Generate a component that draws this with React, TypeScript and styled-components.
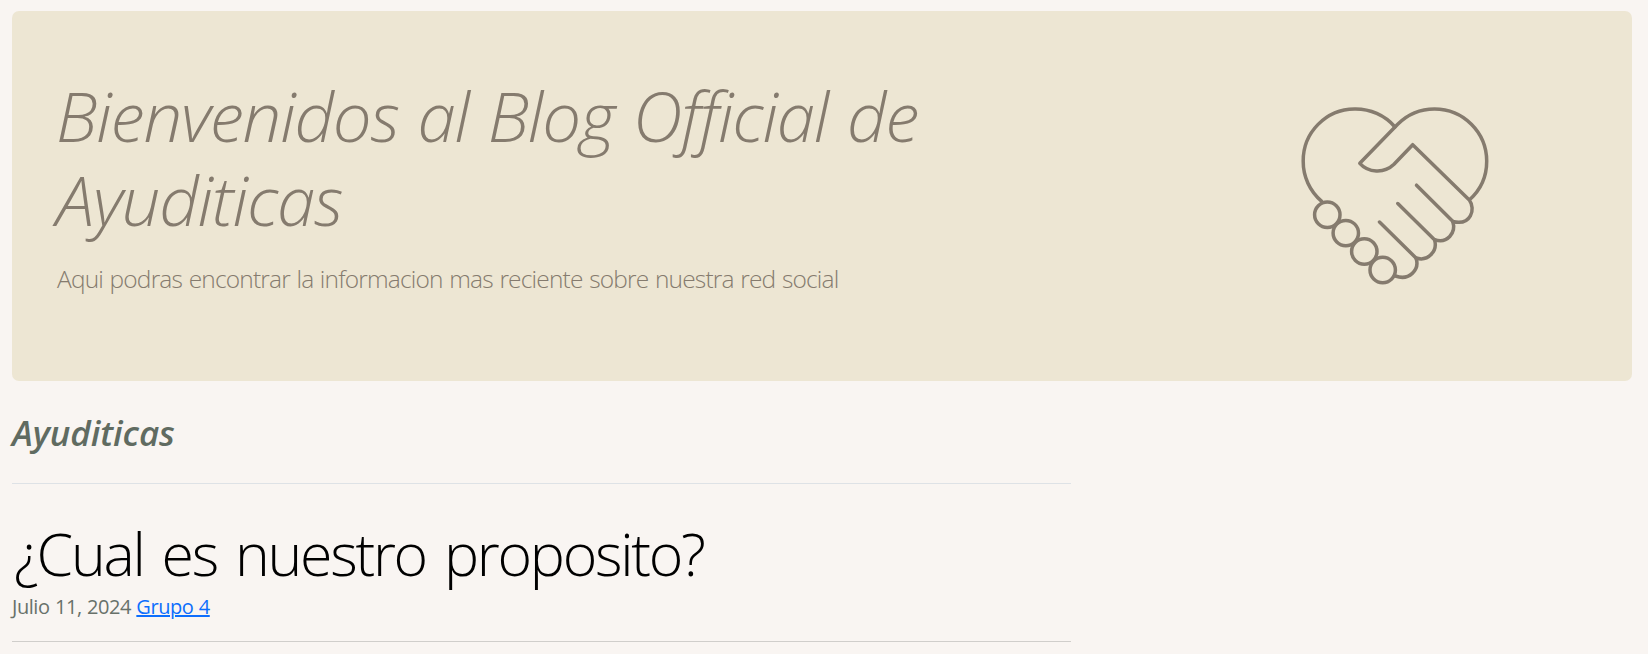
import React from "react";
import styled, { createGlobalStyle } from "styled-components";

const GlobalStyle = createGlobalStyle`
  *, *::before, *::after { box-sizing: border-box; }
  body {
    margin: 0;
    background: #f9f5f2;
    color: #000;
    font-family: "Segoe UI", "Open Sans", "Noto Sans", sans-serif;
  }
  h1, h2, h3, p { margin: 0; }
`;

const Page = styled.main`
  height: 654px;
  padding: 11px 16px 0 12px;
  overflow: hidden;
`;

const Hero = styled.section`
  display: flex;
  align-items: flex-start;
  width: 1620px;
  height: 370px;
  padding: 62px 0 0 45px;
  border-radius: 7px;
  background: #ede6d3;
  color: #857b6e;
`;

const HeroText = styled.div`
  flex: 0 0 1244px;
`;

const HeroTitle = styled.h1`
  margin-left: -1px;
  font-size: 69px;
  font-style: italic;
  font-weight: 300;
  letter-spacing: -1.2px;
  word-spacing: 2px;
  line-height: 84px;
  white-space: nowrap;
`;

const HeroLead = styled.p`
  margin-top: 19px;
  font-size: 24.5px;
  font-weight: 300;
  letter-spacing: -0.82px;
  word-spacing: 1px;
  line-height: 38px;
  white-space: nowrap;
`;

const HeartHands = styled.svg`
  flex: none;
  width: 190px;
  height: 182px;
  margin-top: 32px;
  fill: none;
  stroke: currentColor;
  stroke-width: 3.5;
  stroke-linecap: round;
  stroke-linejoin: round;
`;

const Column = styled.section`
  width: 1059px;
`;

const SectionTitle = styled.h3`
  height: 103px;
  padding-top: 31px;
  border-bottom: 1px solid #dee2e6;
  color: #606b61;
  font-size: 35px;
  font-style: italic;
  font-weight: 600;
  letter-spacing: -0.1px;
  line-height: 42px;
`;

const PostTitle = styled.h2`
  padding: 33px 0 0 2px;
  font-size: 59px;
  font-weight: 300;
  letter-spacing: -2.27px;
  word-spacing: 5px;
  line-height: 72px;
  white-space: nowrap;
`;

const PostMeta = styled.p`
  height: 53px;
  padding-top: 3px;
  border-bottom: 1px solid #d0cecb;
  color: #68716a;
  font-size: 20px;
  letter-spacing: -0.44px;
  word-spacing: 0.6px;
  line-height: 30px;
`;

const AuthorLink = styled.a`
  color: #0d6efd;
  text-decoration: underline;
  text-decoration-thickness: 2px;
`;

export default function App() {
  return (
    <>
      <GlobalStyle />
      <Page>
        <Hero>
          <HeroText>
            <HeroTitle>
              Bienvenidos al Blog Official de
              <br />
              Ayuditicas
            </HeroTitle>
            <HeroLead>
              Aqui podras encontrar la informacion mas reciente sobre nuestra red social
            </HeroLead>
          </HeroText>
          <HeartHands viewBox="1301 105 190 182" aria-hidden="true">
            <path d="M1321.7 201.3A52 52 0 0 1 1303.2 161A51.7 51.7 0 0 1 1354.5 109A52 52 0 0 1 1395 127" />
            <path d="M1469.3 200A52 52 0 0 0 1486.7 161A52.2 52.2 0 0 0 1434.5 108.9A52 52 0 0 0 1397.7 124.2L1359.8 163.3C1368 172.5 1384 174 1394 164.3L1412.7 144.7L1469.3 200C1476 209 1471 226 1452.7 221.5" />
            <path d="M1416.5 185.2L1452.7 221.3C1456.5 233 1447 244 1434.7 239.7" />
            <path d="M1397.8 203.6L1434.5 239.7C1438 251 1428 262 1416 258" />
            <path d="M1379.5 222L1416 258C1420 270 1409 281 1395.5 276" />
            <circle cx="1327.3" cy="214.7" r="12.7" />
            <circle cx="1345.8" cy="233.1" r="12.7" />
            <circle cx="1364.3" cy="251.5" r="12.7" />
            <circle cx="1382.7" cy="270" r="12.7" />
          </HeartHands>
        </Hero>
        <Column>
          <SectionTitle>Ayuditicas</SectionTitle>
          <PostTitle>¿Cual es nuestro proposito?</PostTitle>
          <PostMeta>
            Julio 11, 2024 <AuthorLink href="#">Grupo 4</AuthorLink>
          </PostMeta>
        </Column>
      </Page>
    </>
  );
}
